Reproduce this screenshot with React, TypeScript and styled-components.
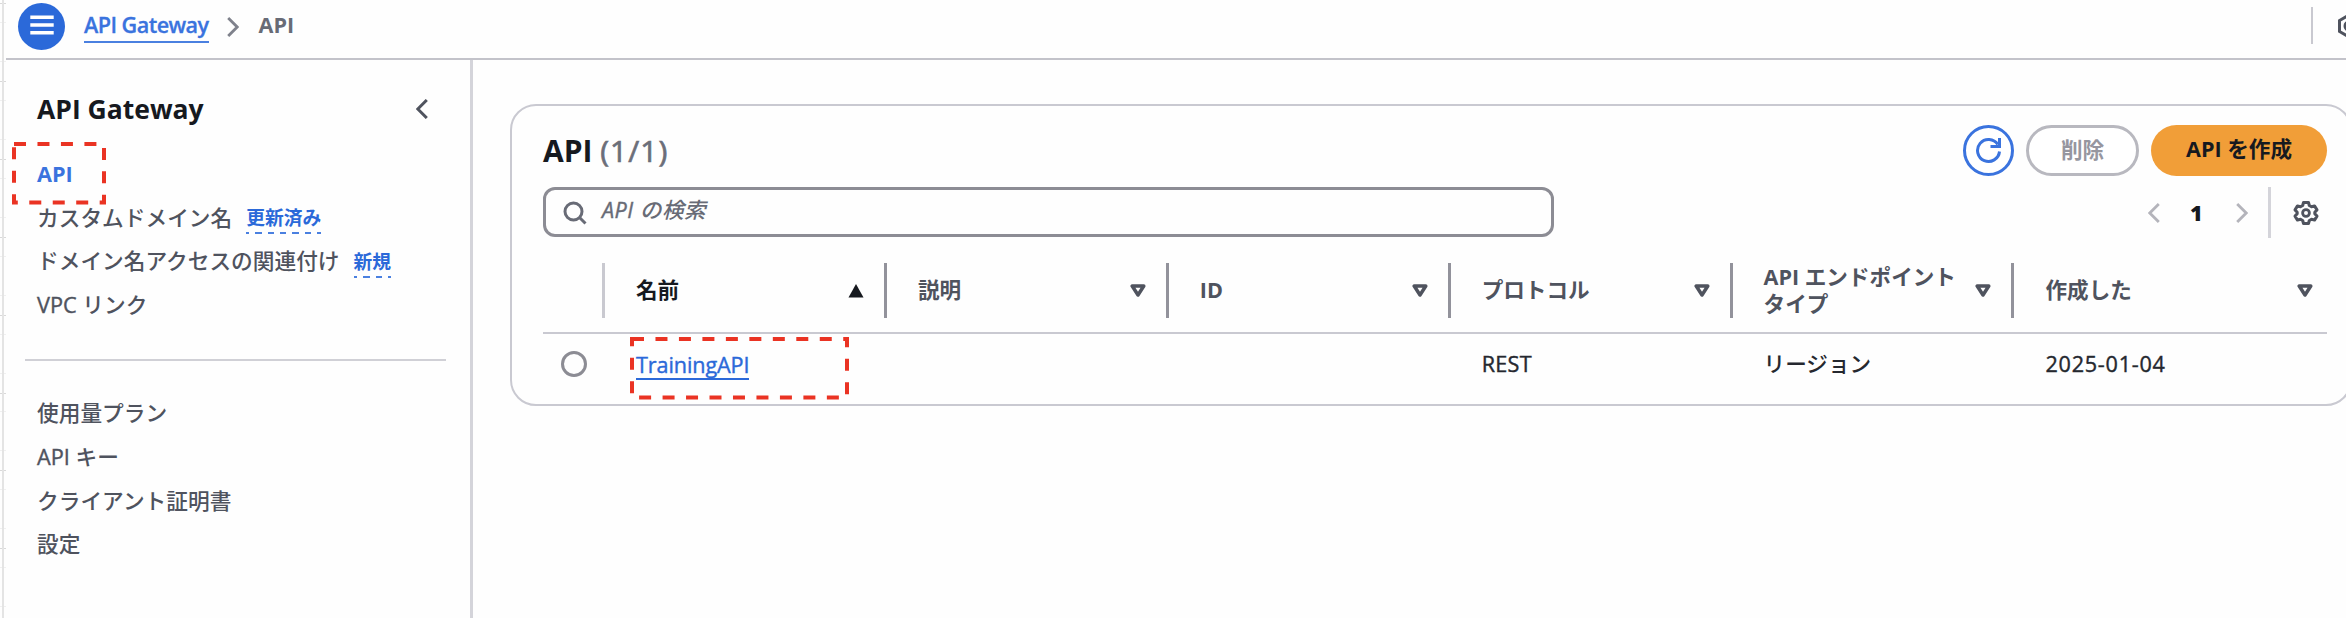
import React from "react";
import styled, { createGlobalStyle, css } from "styled-components";

const Global = createGlobalStyle`
  * { box-sizing: border-box; }
  html, body { margin: 0; padding: 0; background: #fff; overflow: hidden; }
  body {
    font-family: "Open Sans", "Noto Sans CJK JP", sans-serif;
    font-size: 21.6px;
    font-weight: 500;
    color: #16191f;
  }
`;

const Page = styled.div`
  display: flex;
  width: 2346px;
  height: 618px;
  overflow: hidden;
  background: #fefefe;
`;

const Ruler = styled.div`
  flex: none;
  width: 6px;
  background:
    linear-gradient(#e4e4e4, #e4e4e4) 2px 0 / 2px 100% no-repeat,
    repeating-linear-gradient(
      transparent 0 3px, #d9d9d9 3px 4px, transparent 4px 22px,
      #f0f0f0 22px 23px, transparent 23px 61px, #f0f0f0 61px 62px,
      transparent 62px 77.9px
    );
`;

const Shell = styled.div`
  flex: 1;
  min-width: 0;
  display: flex;
  flex-direction: column;
`;

const TopBar = styled.header`
  flex: none;
  height: 60px;
  display: flex;
  align-items: flex-start;
  border-bottom: 2px solid #c3c3ca;
  padding: 3px 0 0 12px;
`;

const MenuButton = styled.button`
  width: 47px;
  height: 47px;
  padding: 0 0 3px;
  border: 0;
  border-radius: 50%;
  background: #2b69d9;
  display: grid;
  place-items: center;
`;

const Crumbs = styled.nav`
  display: flex;
  align-items: center;
  height: 47px;
  margin-left: 19px;
  flex: 1;
`;

const CrumbLink = styled.a`
  line-height: 36px;
  height: 36px;
  margin-top: -4px;
  border-bottom: 2px solid #4a80e0;
  color: #3a73de;
  font-weight: 600;
  letter-spacing: -0.55px;
  -webkit-text-stroke: 0.3px currentColor;
`;

const CrumbIcon = styled.span`
  display: flex;
  margin: 1px 20px 0 18px;
`;

const CrumbCurrent = styled.span`
  color: #686b76;
  font-weight: 700;
  line-height: 34px;
  margin-top: -3px;
`;

const TopTools = styled.div`
  display: flex;
  align-items: center;
  width: 35px;
  height: 37px;
  margin-top: 4px;
  overflow: hidden;
  border-left: 2px solid #c9c9d0;
  padding-left: 23px;

  svg { flex: none; }
`;

const Body = styled.div`
  flex: 1;
  display: flex;
  min-height: 0;
`;

const SideNav = styled.aside`
  flex: none;
  width: 467px;
  border-right: 3px solid #d4d4da;
  padding: 30px 24px 0 19px;
`;

const SideHeader = styled.div`
  display: flex;
  justify-content: space-between;
  align-items: center;
  height: 38px;
  padding: 0 18px 0 12px;
`;

const SideTitle = styled.h2`
  margin: 0;
  font-size: 26.5px;
  font-weight: 700;
  line-height: 38px;
`;

const NavList = styled.ul<{ $top: number }>`
  list-style: none;
  margin: ${(p) => p.$top}px 0 0;
  padding: 0 0 0 12px;
`;

const NavItem = styled.li<{ $active?: boolean }>`
  display: flex;
  align-items: center;
  height: 43.8px;
  line-height: 32px;
  font-size: 21.7px;
  white-space: nowrap;
  color: ${(p) => (p.$active ? "#3a73de" : "#4f535e")};
  font-weight: ${(p) => (p.$active ? 700 : 500)};
`;

const Highlight = styled.span`
  position: relative;
  line-height: 34px;

  & > svg {
    position: absolute;
    left: -25.5px;
    top: -15px;
    pointer-events: none;
  }
`;

const Latin = styled.span`
  white-space: pre;
  -webkit-text-stroke: 0.4px currentColor;
`;

const Tag = styled.span`
  margin-left: 14px;
  padding-top: 2px;
  height: 33px;
  line-height: 30px;
  font-size: 18.75px;
  font-weight: 700;
  color: #2b69d9;
  background: repeating-linear-gradient(
    90deg, #4a80e0 0 3.3px, transparent 3.3px 9.2px, #4a80e0 9.2px 12.4px
  ) 0 100% / 100% 2px no-repeat;
`;

const Divider = styled.hr`
  margin: 32px 0 0;
  border: 0;
  height: 2px;
  background: #d0d0d6;
`;

const Main = styled.main`
  flex: 1;
  min-width: 0;
  padding: 44px 0 0 37px;
`;

const Card = styled.section`
  width: 1842px;
  height: 302px;
  border: 2px solid #c9c9d1;
  border-radius: 26px;
  padding: 19px 0 0 31px;
`;

const CardInner = styled.div`
  width: 1784px;
`;

const CardHeader = styled.div`
  display: flex;
  justify-content: space-between;
  height: 51px;
`;

const Heading = styled.h1`
  margin: 0;
  font-size: 30px;
  line-height: 52px;
  font-weight: 700;

  span {
    color: #6b6e79;
    font-weight: 400;
    letter-spacing: 1px;
    -webkit-text-stroke: 0.7px currentColor;
  }
`;

const Actions = styled.div`
  display: flex;
  gap: 12px;
`;

const Button = styled.button<{ $kind: "icon" | "disabled" | "primary" }>`
  height: 51px;
  padding: 0 0 1px;
  border-radius: 26px;
  font: 700 21.6px/44px "Open Sans", "Noto Sans CJK JP", sans-serif;
  display: flex;
  align-items: center;
  justify-content: center;
  background: #fff;
  ${(p) =>
    p.$kind === "icon" &&
    css`width: 51px; border: 3px solid #3a73de;`}
  ${(p) =>
    p.$kind === "disabled" &&
    css`width: 113px; border: 3px solid #b8b8bf; color: #96969f;`}
  ${(p) =>
    p.$kind === "primary" &&
    css`width: 176px; border: 0; padding-bottom: 3px; background: #f19e38; color: #16191f;`}
`;

const ToolRow = styled.div`
  display: flex;
  justify-content: space-between;
  height: 50px;
  margin-top: 11px;
`;

const SearchBox = styled.div`
  width: 1011px;
  height: 50px;
  border: 3px solid #8c8c94;
  border-radius: 12px;
  display: flex;
  align-items: flex-start;
  padding: 9px 0 0 17px;
  color: #686b76;
  font-style: italic;
  letter-spacing: 0.5px;

  svg { margin-top: 2px; }
  & > span { margin-left: 15px; line-height: 22px; }
`;

const Pager = styled.div`
  display: flex;
  align-items: center;
  height: 51px;
  margin-right: 8px;
  font-weight: 700;

  b { width: 12px; margin: 0 34px 0 30px; text-align: center; }
`;

const PagerRule = styled.i`
  width: 3px;
  height: 51px;
  margin: 0 22px 0 20px;
  background: #d4d4da;
`;

const Row = styled.div<{ $head?: boolean }>`
  display: grid;
  grid-template-columns: 62px repeat(5, 281.9px) 1fr;
  height: ${(p) => (p.$head ? 97 : 60)}px;
  padding-top: ${(p) => (p.$head ? 26 : 0)}px;
  align-items: ${(p) => (p.$head ? "start" : "center")};
  border-bottom: ${(p) => (p.$head ? "2px solid #c9c9d1" : "0")};
`;

const HeadCell = styled.div<{ $sorted?: boolean; $first?: boolean; $last?: boolean }>`
  height: 55px;
  margin-left: -3px;
  border-left: 3px solid ${(p) => (p.$first ? "#c9c9d0" : "#92929b")};
  display: flex;
  align-items: center;
  justify-content: space-between;
  padding: 0 ${(p) => (p.$last ? 14 : 23)}px 0 31px;
  line-height: 26.5px;
  font-weight: 700;
  color: ${(p) => (p.$sorted ? "#16191f" : "#4f535e")};
  white-space: nowrap;
`;

const Cell = styled.div<{ $spacing?: number }>`
  display: flex;
  padding-left: 31px;
  line-height: 32px;
  letter-spacing: ${(p) => p.$spacing ?? 0}px;
  color: #25282f;
`;

const Radio = styled.span`
  display: block;
  width: 26px;
  height: 26px;
  margin-left: 18px;
  border: 3px solid #8c8c94;
  border-radius: 50%;
`;

const ApiLink = styled.a`
  position: relative;
  height: 32px;
  line-height: 33px;
  color: #2b69d9;
  border-bottom: 2px solid #2b69d9;
  letter-spacing: -0.1px;

  & > svg {
    position: absolute;
    left: -6.5px;
    top: -11px;
    pointer-events: none;
  }
`;

const Chevron = ({ dir, color, w = 2.8 }: { dir: "left" | "right"; color: string; w?: number }) => (
  <svg width="12" height="20" viewBox="0 0 12 20" fill="none" stroke={color} strokeWidth={w}>
    <path d={dir === "left" ? "M10.8 1 1.8 10l9 9" : "M1.2 1l9 9-9 9"} />
  </svg>
);

const SortIcon = ({ up }: { up?: boolean }) => (
  <svg width="16" height="14" viewBox="0 0 16 14">
    {up ? (
      <path d="M8 0 15.5 13.5H.5z" fill="#16191f" />
    ) : (
      <path d="M2.2 2h11.6L8 11z" fill="none" stroke="#4f535e" strokeWidth="3.5" strokeLinejoin="round" />
    )}
  </svg>
);

const DashedFrame = ({ width }: { width: number }) => (
  <svg width={width} height="63">
    <path
      d={`M2 2H${width - 2}V60.5H2z`}
      fill="none"
      stroke="#ea3323"
      strokeWidth="4"
      strokeDasharray="12 11.47"
    />
  </svg>
);

const GearIcon = () => (
  <svg width="26" height="26" viewBox="0 0 26 26" fill="none" stroke="#4f535e" strokeWidth="3" strokeLinejoin="round">
    <path d="M10.5 2.500h5l.8 3 2.200 1.200 3-.8 2.500 4-2.200 2.300v1.600l2.200 2.300-2.500 4-3-.8-2.200 1.200-.8 3h-5l-.8-3-2.200-1.200-3 .8-2.500-4 2.200-2.300v-1.600L2 9.900l2.500-4 3 .8 2.200-1.200z" />
    <circle cx="13" cy="13" r="3.400" strokeWidth="2.800" />
  </svg>
);

const COLUMNS = ["説明", "ID", "プロトコル"];

export default function App() {
  return (
    <>
      <Global />
      <Page>
        <Ruler />
        <Shell>
          <TopBar>
            <MenuButton>
              <svg width="24" height="22" viewBox="0 0 24 22" stroke="#fff" strokeWidth="3.6">
                <path d="M.3 3.200h23.400M.3 11h23.400M.3 18.800h23.400" />
              </svg>
            </MenuButton>
            <Crumbs>
              <CrumbLink>API Gateway</CrumbLink>
              <CrumbIcon><Chevron dir="right" color="#7f828c" /></CrumbIcon>
              <CrumbCurrent>API</CrumbCurrent>
            </Crumbs>
            <TopTools>
              <svg width="26" height="26" viewBox="0 0 26 26" fill="none" stroke="#4f535e" strokeWidth="3">
                <path d="M13 2 3.500 7.500v11L13 24l9.500-5.500v-11z" />
                <circle cx="13" cy="13" r="4" />
              </svg>
            </TopTools>
          </TopBar>
          <Body>
            <SideNav>
              <SideHeader>
                <SideTitle>API Gateway</SideTitle>
                <Chevron dir="left" color="#4f535e" w={3} />
              </SideHeader>
              <NavList $top={24}>
                <NavItem $active>
                  <Highlight>
                    API
                    <DashedFrame width={94} />
                  </Highlight>
                </NavItem>
                <NavItem>カスタムドメイン名<Tag>更新済み</Tag></NavItem>
                <NavItem>ドメイン名アクセスの関連付け<Tag>新規</Tag></NavItem>
                <NavItem><Latin>VPC </Latin>リンク</NavItem>
              </NavList>
              <Divider />
              <NavList $top={30}>
                <NavItem>使用量プラン</NavItem>
                <NavItem><Latin>API </Latin>キー</NavItem>
                <NavItem>クライアント証明書</NavItem>
                <NavItem>設定</NavItem>
              </NavList>
            </SideNav>
            <Main>
              <Card>
                <CardInner>
                  <CardHeader>
                    <Heading>API <span>(1/1)</span></Heading>
                    <Actions>
                      <Button $kind="icon">
                        <svg width="27" height="27" viewBox="0 0 27 27" fill="none" stroke="#3a73de" strokeWidth="3">
                          <path d="M24.500 14.500A11 11 0 1 1 22.800 7.500M24.500 1v8.500h-9" />
                        </svg>
                      </Button>
                      <Button $kind="disabled">削除</Button>
                      <Button $kind="primary">API を作成</Button>
                    </Actions>
                  </CardHeader>
                  <ToolRow>
                    <SearchBox>
                      <svg width="24" height="24" viewBox="0 0 24 24" fill="none" stroke="#686b76" strokeWidth="3">
                        <circle cx="10.500" cy="10.500" r="8.500" />
                        <path d="m16.500 16.500 6 6" />
                      </svg>
                      <span><Latin>API </Latin>の検索</span>
                    </SearchBox>
                    <Pager>
                      <Chevron dir="left" color="#b4b4bb" />
                      <b>1</b>
                      <Chevron dir="right" color="#b4b4bb" />
                      <PagerRule />
                      <GearIcon />
                    </Pager>
                  </ToolRow>
                  <Row $head>
                    <span />
                    <HeadCell $first $sorted>名前<SortIcon up /></HeadCell>
                    {COLUMNS.map((c) => (
                      <HeadCell key={c}>{c}<SortIcon /></HeadCell>
                    ))}
                    <HeadCell><span>API エンドポイント<br />タイプ</span><SortIcon /></HeadCell>
                    <HeadCell $last>作成した<SortIcon /></HeadCell>
                  </Row>
                  <Row>
                    <Radio />
                    <Cell>
                      <ApiLink>
                        <Latin>TrainingAPI</Latin>
                        <DashedFrame width={219} />
                      </ApiLink>
                    </Cell>
                    <Cell />
                    <Cell />
                    <Cell $spacing={0.3}><Latin>REST</Latin></Cell>
                    <Cell>リージョン</Cell>
                    <Cell $spacing={0.75}><Latin>2025-01-04</Latin></Cell>
                  </Row>
                </CardInner>
              </Card>
            </Main>
          </Body>
        </Shell>
      </Page>
    </>
  );
}
